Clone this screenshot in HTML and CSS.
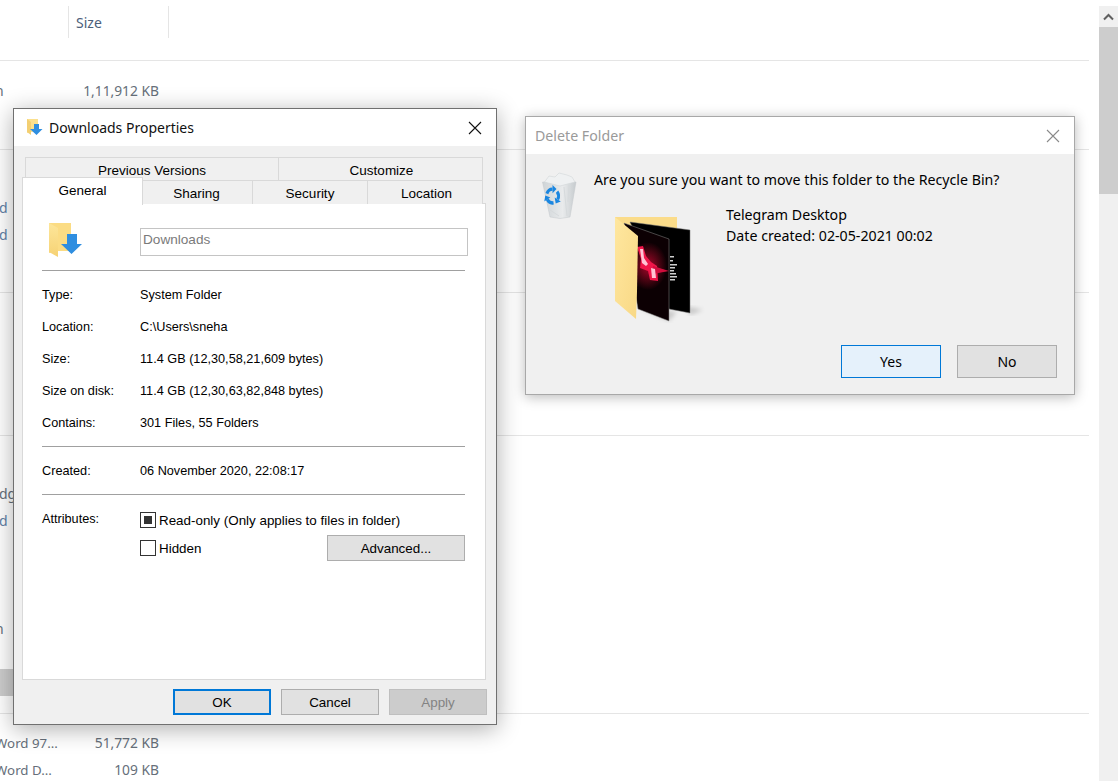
FILE: index.html
```html
<!DOCTYPE html>
<html lang="en">
<head>
    <meta charset="UTF-8">
    <title>Downloads Properties</title>
    <link rel="stylesheet" href="styles.css">
</head>
<body>

    <div class="desktop">
        <!-- explorer list behind the dialogs -->
        <div class="list">
            <div class="list-head">
                <div class="head-cell">Size</div>
            </div>
            <div class="group first">
                <div class="row"><span class="type clip-far">n</span><span class="size">1,11,912 KB</span></div>
            </div>
            <div class="group">
                <div class="row"><span class="type link">d</span></div>
                <div class="row"><span class="type link">d</span></div>
            </div>
            <div class="group empty"></div>
            <div class="group tall">
                <div class="row"><span class="type">dg</span></div>
                <div class="row"><span class="type link">d</span></div>
                <div class="row"></div>
                <div class="row"></div>
                <div class="row"></div>
                <div class="row"><span class="type clip-far">n</span></div>
                <div class="row"></div>
                <div class="row selected"></div>
            </div>
            <div class="group last">
                <div class="row"><span class="type clip-word">Word 97...</span><span class="size">51,772 KB</span></div>
                <div class="row"><span class="type clip-word">Word D...</span><span class="size">109 KB</span></div>
            </div>
        </div>

        <div class="scrollbar">
            <div class="scroll-btn">
                <svg width="19" height="21" viewBox="0 0 19 21"><path d="M5 13.500 9.500 9l4.500 4.500" fill="none" stroke="#606060" stroke-width="2"/></svg>
            </div>
            <div class="scroll-thumb"></div>
        </div>

        <!-- properties window -->
        <div class="window props">
            <div class="titlebar props-title">
                <svg class="title-icon" width="16" height="17" viewBox="0 0 16 17">
                    <path d="M0 0H11V13H3L0 14Z" fill="#fbe08e"/>
                    <path d="M0 0 4 3V16L0 13Z" fill="#f3cf72"/>
                    <path d="M7 5H12V10H15.500L9.500 16 3 10H7Z" fill="#2f8ee0"/>
                </svg>
                <span class="title-text">Downloads Properties</span>
                <svg class="close" width="14" height="14" viewBox="0 0 14 14"><path d="M1 1 13 13M13 1 1 13" stroke="#111" stroke-width="1.100"/></svg>
            </div>
            <div class="props-body">
                <div class="tab-row back">
                    <div class="tab wide-a">Previous Versions</div>
                    <div class="tab wide-b">Customize</div>
                </div>
                <div class="tab-row front">
                    <div class="tab active">General</div>
                    <div class="tab t-sharing">Sharing</div>
                    <div class="tab t-security">Security</div>
                    <div class="tab t-location">Location</div>
                </div>
                <div class="panel">
                    <div class="name-row">
                        <svg class="big-folder" width="34" height="36" viewBox="0 0 34 36">
                            <defs>
                                <linearGradient id="fy" x1="0" y1="0" x2="0" y2="1">
                                    <stop offset="0" stop-color="#fde69a"/>
                                    <stop offset="1" stop-color="#f6d274"/>
                                </linearGradient>
                            </defs>
                            <path d="M0 0H22V28H9L0 30Z" fill="#fbdc84"/>
                            <path d="M0 0 9 5V34L0 29Z" fill="url(#fy)"/>
                            <path d="M18 11H28V21H33L22.500 31 12 21H18Z" fill="#2f8ee0"/>
                        </svg>
                        <div class="name-input">Downloads</div>
                    </div>
                    <div class="section">
                        <div class="prop"><span>Type:</span><span>System Folder</span></div>
                        <div class="prop"><span>Location:</span><span>C:\Users\sneha</span></div>
                        <div class="prop"><span>Size:</span><span>11.4 GB (12,30,58,21,609 bytes)</span></div>
                        <div class="prop"><span>Size on disk:</span><span>11.4 GB (12,30,63,82,848 bytes)</span></div>
                        <div class="prop"><span>Contains:</span><span>301 Files, 55 Folders</span></div>
                    </div>
                    <div class="section">
                        <div class="prop"><span>Created:</span><span>06 November 2020, 22:08:17</span></div>
                    </div>
                    <div class="section attrs">
                        <div class="attr-label">Attributes:</div>
                        <div class="attr-list">
                            <div class="attr-line">
                                <span class="check mixed"></span><span>Read-only (Only applies to files in folder)</span>
                            </div>
                            <div class="attr-line second">
                                <span class="check"></span><span>Hidden</span>
                                <button class="btn advanced">Advanced...</button>
                            </div>
                        </div>
                    </div>
                </div>
                <div class="props-foot">
                    <button class="btn default">OK</button>
                    <button class="btn">Cancel</button>
                    <button class="btn disabled">Apply</button>
                </div>
            </div>
        </div>

        <!-- delete confirmation -->
        <div class="window confirm">
            <div class="titlebar confirm-title">
                <span class="confirm-text">Delete Folder</span>
                <svg class="close" width="14" height="14" viewBox="0 0 14 14"><path d="M1 1 13 13M13 1 1 13" stroke="#8a8a8a" stroke-width="1.100"/></svg>
            </div>
            <div class="confirm-body">
                <div class="confirm-main">
                    <svg class="bin" width="36" height="47" viewBox="0 0 36 47">
                        <defs>
                            <linearGradient id="bg" x1="0" y1="0" x2="1" y2="0">
                                <stop offset="0" stop-color="#cfd4d7"/>
                                <stop offset="0.6" stop-color="#e9ebec"/>
                                <stop offset="1" stop-color="#c6cbce"/>
                            </linearGradient>
                            <filter id="soft"><feGaussianBlur stdDeviation="0.400"/></filter>
                        </defs>
                        <g filter="url(#soft)">
                            <path d="M0.500 10 34 10 28 45 18 46.500 8 45Z" fill="url(#bg)" stroke="#c4c9cc" stroke-width="0.500"/>
                            <path d="M2.500 10 7 4 13 5 17 1 25 3 30 5 33 10 18 14Z" fill="#eff1f2" stroke="#d2d6d8" stroke-width="0.600"/>
                            <path d="M22 15 25 44M27 13 26 30M8 38 17 44" stroke="#d6dadc" stroke-width="1" fill="none"/>
                        </g>
                        <!-- recycle arrows -->
                        <g fill="#1a86e0" stroke="none">
                            <g transform="translate(10.500 24) scale(1 1.150)">
                                <path d="M-5.600 -2.050A6 6 0 0 1 0 -6" fill="none" stroke="#1a86e0" stroke-width="3"/>
                                <path d="M0 -9.500V-2.500L4 -6Z"/>
                            </g>
                            <g transform="translate(10.500 24) scale(1 1.150) rotate(120)">
                                <path d="M-5.600 -2.050A6 6 0 0 1 0 -6" fill="none" stroke="#1a86e0" stroke-width="3"/>
                                <path d="M0 -9.500V-2.500L4 -6Z"/>
                            </g>
                            <g transform="translate(10.500 24) scale(1 1.150) rotate(240)">
                                <path d="M-5.600 -2.050A6 6 0 0 1 0 -6" fill="none" stroke="#1a86e0" stroke-width="3"/>
                                <path d="M0 -9.500V-2.500L4 -6Z"/>
                            </g>
                        </g>
                    </svg>
                    <div class="confirm-content">
                        <div class="question">Are you sure you want to move this folder to the Recycle Bin?</div>
                        <div class="item">
                            <svg class="thumb-folder" width="90" height="107" viewBox="0 0 90 107">
                                <defs>
                                    <radialGradient id="halo" cx="0.5" cy="0.5" r="0.5">
                                        <stop offset="0" stop-color="#a8062a"/>
                                        <stop offset="0.6" stop-color="#4a0412"/>
                                        <stop offset="1" stop-color="#0c0003"/>
                                    </radialGradient>
                                    <linearGradient id="flap" x1="0" y1="0" x2="1" y2="1">
                                        <stop offset="0" stop-color="#ffe79f"/>
                                        <stop offset="1" stop-color="#f8d885"/>
                                    </linearGradient>
                                    <filter id="blur"><feGaussianBlur stdDeviation="0.700"/></filter>
                                    <filter id="blur2"><feGaussianBlur stdDeviation="2"/></filter>
                                </defs>
                                <path d="M70 90 88 94 75 99Z" fill="#c8c8c8" filter="url(#blur2)"/>
                                <path d="M24 92 54 105 62 96Z" fill="#c8c8c8" filter="url(#blur2)"/>
                                <path d="M0 1H62V60H0Z" fill="#fbdc8a"/>
                                <path d="M15 6 75 14V97L54 93Z" fill="#000" stroke="#777" stroke-width="0.500"/>
                                <path d="M55 40h4v1.500h-4zM55 44h3v1.500h-3zM55 48h7v1.500h-7zM55 51h5v1.500h-5zM55 54h4v1.500h-4zM55 57h6v1.500h-6zM55 60h7v1.500h-7zM55 63h5v1.500h-5z" fill="#cfcfcf"/>
                                <path d="M9 7 54 23V105L23 93Z" fill="#0c0003" stroke="#8a8a8a" stroke-width="0.500"/>
                                <ellipse cx="33" cy="50" rx="19" ry="24" fill="url(#halo)"/>
                                <g filter="url(#blur)">
                                    <path d="M22 31 28 30 31 40 36 46 42 50 43 65 35 64 33 55 25 52 26 43Z" fill="#f0144a"/>
                                    <path d="M38 50 54 55 38 58Z" fill="#d0103c"/>
                                </g>
                                <g filter="url(#blur)" fill="#ffc4d4">
                                    <path d="M25 33 28 33 29 42 33 48 31 50 27 47Z"/>
                                    <path d="M36 52 40 53 41 62 37 62Z"/>
                                </g>
                                <path d="M0 1 23 20 22 76 21 103 0 85Z" fill="url(#flap)"/>
                            </svg>
                            <div class="item-text">
                                <div>Telegram Desktop</div>
                                <div>Date created: 02-05-2021 00:02</div>
                            </div>
                        </div>
                    </div>
                </div>
                <div class="confirm-foot">
                    <button class="btn big primary">Yes</button>
                    <button class="btn big">No</button>
                </div>
            </div>
        </div>
    </div>

</body>
</html>
```

FILE: styles.css
```css
html, body {
    margin: 0;
    height: 100%;
    overflow: hidden;
    background-color: #ffffff;
}

.desktop {
    position: relative;
    display: flex;
    height: 781px;
    overflow: hidden;
    font-family: "Noto Sans", "Open Sans", sans-serif;
    font-size: 14px;
}

/* background list */
.list {
    width: 1089px;
    flex-shrink: 0;
}

.list-head {
    height: 54px;
    padding: 6px 0 0 68px;
    border-bottom: 1px solid #e5e5e5;
}

.head-cell {
    width: 101px;
    height: 32px;
    line-height: 34px;
    padding-left: 7px;
    box-sizing: border-box;
    border-left: 1px solid #e5e5e5;
    border-right: 1px solid #e5e5e5;
    color: #4c607a;
}

.group {
    border-bottom: 1px solid #e5e5e5;
    padding-top: 44px;
    box-sizing: border-box;
    height: 143px;
}

.group.first {
    height: 89px;
    padding-top: 16px;
}

.group.tall {
    height: 278px;
}

.group.last {
    border-bottom: none;
    height: 68px;
    padding-top: 15px;
}

.group.empty {
    padding-top: 0;
}

.row {
    position: relative;
    height: 27px;
    line-height: 27px;
    color: #666f7a;
    white-space: nowrap;
}

.row.selected {
    background-color: #cdcdcd;
    width: 14px;
}

.type {
    display: inline-block;
    width: 60px;
    margin-left: -1px;
}

.type.link {
    color: #5f7fa6;
}

.type.clip-far {
    margin-left: -5px;
}

.type.clip-word {
    margin-left: -5px;
    width: 70px;
    font-size: 13.3px;
}

.size {
    position: absolute;
    left: 60px;
    width: 99px;
    text-align: right;
    font-size: 13.8px;
}

/* scrollbar */
.scrollbar {
    margin-left: 10px;
    margin-top: 6px;
    width: 19px;
    background-color: #f0f0f0;
    flex-shrink: 0;
}

.scroll-btn {
    height: 21px;
}

.scroll-btn svg {
    display: block;
}

.scroll-thumb {
    height: 167px;
    background-color: #cdcdcd;
}

/* windows */
.window {
    position: absolute;
    box-sizing: border-box;
    display: flex;
    flex-direction: column;
    background-color: #f0f0f0;
}

.props {
    left: 13px;
    top: 108px;
    width: 484px;
    height: 617px;
    border: 1px solid #707070;
    box-shadow: 0 4px 22px rgba(0, 0, 0, 0.32);
    font-family: "Liberation Sans", Arial, sans-serif;
    font-size: 12.7px;
    color: #000000;
}

.confirm {
    left: 525px;
    top: 116px;
    width: 550px;
    height: 279px;
    border: 1px solid #a8a8a8;
    box-shadow: 0 2px 12px rgba(0, 0, 0, 0.28);
    font-size: 14.2px;
}

.titlebar {
    display: flex;
    align-items: center;
    background-color: #ffffff;
    flex-shrink: 0;
}

.props-title {
    height: 37px;
    padding-left: 13px;
    padding-right: 14px;
}

.title-icon {
    margin-right: 6px;
}

.title-text {
    font-family: "Noto Sans", sans-serif;
    font-size: 14px;
    color: #111111;
}

.close {
    margin-left: auto;
}

.confirm-title {
    height: 37px;
    padding-left: 9px;
    padding-right: 14px;
}

.confirm-text {
    color: #9a9a9a;
    margin-top: -1px;
}

/* tabs */
.props-body {
    flex: 1;
    padding-top: 11px;
}

.tab-row {
    display: flex;
    box-sizing: border-box;
    height: 24px;
}

.tab-row.back {
    margin-left: 11px;
    height: 23px;
}

.tab-row.front {
    margin-left: 8px;
    align-items: flex-end;
    position: relative;
    z-index: 1;
}

.tab {
    box-sizing: border-box;
    height: 24px;
    line-height: 25px;
    text-align: center;
    font-size: 13.5px;
    border: 1px solid #d9d9d9;
    border-left-width: 0;
    border-bottom: 0;
    background-color: #f0f0f0;
}

.wide-a {
    width: 254px;
    border-left-width: 1px;
}

.wide-b {
    width: 204px;
    padding-left: 2px;
}

.tab.active {
    width: 121px;
    height: 28px;
    margin-top: -4px;
    margin-bottom: -1px;
    background-color: #ffffff;
    border-left-width: 1px;
    line-height: 26px;
}

.t-sharing {
    width: 110px;
    padding-right: 2px;
}

.t-security {
    width: 115px;
}

.t-location {
    width: 115px;
    padding-left: 3px;
}

.panel {
    box-sizing: border-box;
    width: 464px;
    height: 477px;
    margin-left: 8px;
    margin-top: -1px;
    padding: 0 20px;
    background-color: #ffffff;
    border: 1px solid #d9d9d9;
}

.name-row {
    position: relative;
    display: flex;
    align-items: flex-start;
    height: 66px;
    padding-left: 98px;
    margin-left: -1px;
}

.big-folder {
    position: absolute;
    left: 7px;
    top: 19px;
}

.name-input {
    box-sizing: border-box;
    flex-shrink: 0;
    width: 328px;
    height: 28px;
    margin-top: 24px;
    line-height: 22px;
    padding-left: 2px;
    font-size: 13.6px;
    border: 1px solid #c4c4c4;
    color: #7a7a7a;
}

.section {
    border-top: 1px solid #a0a0a0;
    padding: 7px 0 8px;
    margin-left: -1px;
}

.prop {
    display: grid;
    grid-template-columns: 98px 1fr;
    box-sizing: border-box;
    height: 32px;
    padding-top: 2px;
    align-items: center;
}

.attrs {
    display: grid;
    grid-template-columns: 98px 1fr;
    padding-top: 9px;
}

.attr-label {
    line-height: 30px;
}

.attr-list {
    display: flex;
    flex-direction: column;
    font-size: 13.4px;
}

.attr-line {
    display: flex;
    align-items: center;
    height: 26px;
    gap: 3px;
    margin-top: 3px;
}

.attr-line.second {
    margin-top: 2px;
}

.check {
    box-sizing: border-box;
    display: flex;
    align-items: center;
    justify-content: center;
    width: 16px;
    height: 16px;
    border: 1px solid #333333;
    background-color: #ffffff;
}

.check.mixed::after {
    content: "";
    width: 8px;
    height: 8px;
    background-color: #333333;
}

/* buttons */
.btn {
    box-sizing: border-box;
    width: 98px;
    height: 26px;
    padding: 0;
    font: inherit;
    font-size: 13.4px;
    color: #000000;
    background-color: #e1e1e1;
    border: 1px solid #adadad;
    border-radius: 0;
}

.advanced {
    width: 138px;
    margin-left: auto;
}

.default {
    border: 2px solid #0078d7;
}

.disabled {
    background-color: #cccccc;
    border-color: #bfbfbf;
    color: #838383;
}

.props-foot {
    display: flex;
    justify-content: flex-end;
    gap: 10px;
    margin-top: 9px;
    padding-right: 9px;
}

/* delete dialog */
.confirm-body {
    flex: 1;
    display: flex;
    flex-direction: column;
    padding: 15px 17px 16px 16px;
}

.confirm-main {
    display: flex;
}

.bin {
    margin-top: 3px;
    margin-right: 16px;
    flex-shrink: 0;
}

.question {
    line-height: 21px;
    color: #000000;
}

.item {
    display: flex;
    margin-top: 14px;
    margin-left: 21px;
}

.thumb-folder {
    margin-top: 12px;
    margin-right: 21px;
    flex-shrink: 0;
}

.item-text {
    line-height: 21px;
    color: #000000;
}

.confirm-foot {
    display: flex;
    justify-content: flex-end;
    gap: 16px;
    margin-top: auto;
}

.btn.big {
    width: 100px;
    height: 33px;
    font-family: "Noto Sans", sans-serif;
    font-size: 14px;
}

.primary {
    background-color: #e5f1fb;
    border-color: #0078d7;
}
```
